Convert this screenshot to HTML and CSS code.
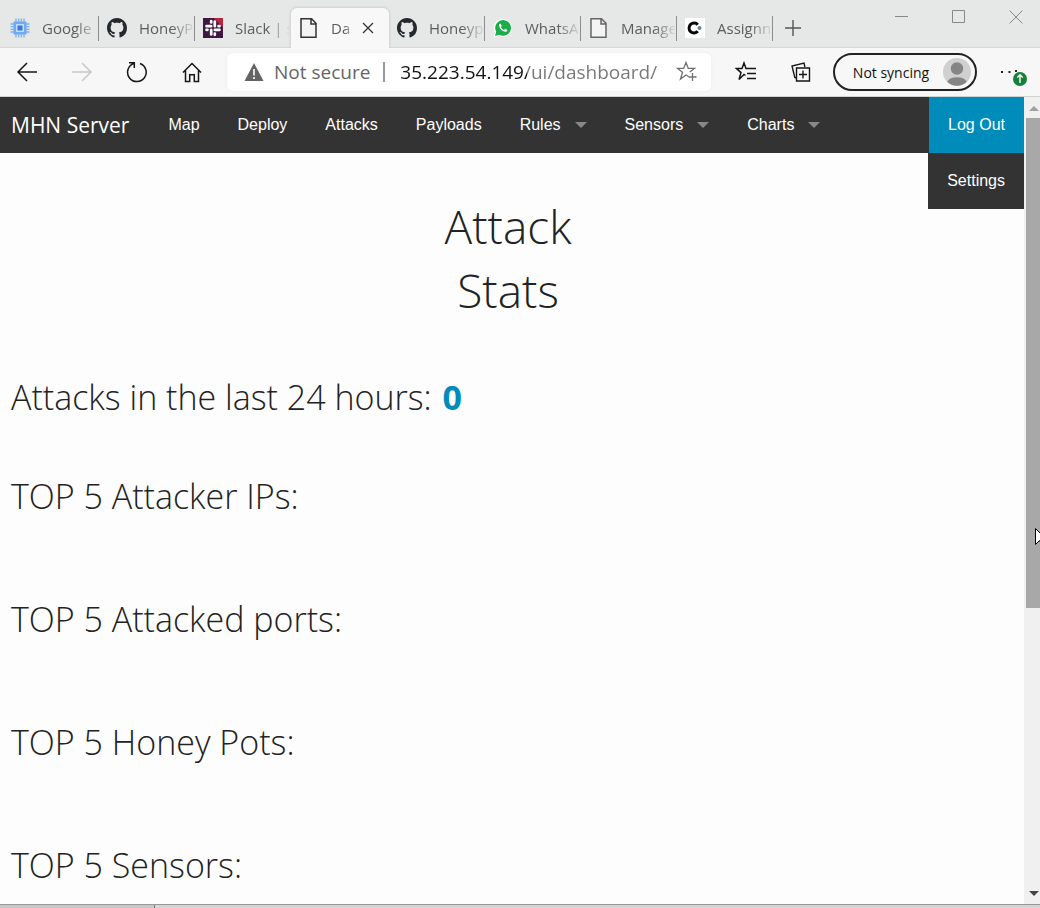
FILE: index.html
```html
<!DOCTYPE html>
<html lang="en">
<head>
<meta charset="utf-8">
<meta name="viewport" content="width=device-width, initial-scale=1">
<title>Dashboard</title>
<link rel="stylesheet" href="styles.css">
</head>
<body>
<svg class="defs" aria-hidden="true">
  <symbol id="github" viewBox="0 0 16 16"><path d="M8 0C3.58 0 0 3.58 0 8c0 3.54 2.29 6.53 5.47 7.59.4.07.55-.17.55-.38 0-.19-.01-.82-.01-1.49-2.01.37-2.53-.49-2.69-.94-.09-.23-.48-.94-.82-1.13-.28-.15-.68-.52-.01-.53.63-.01 1.08.58 1.23.82.72 1.21 1.87.87 2.33.66.07-.52.28-.87.51-1.07-1.78-.2-3.64-.89-3.64-3.95 0-.87.31-1.59.82-2.15-.08-.2-.36-1.02.08-2.12 0 0 .67-.21 2.2.82.64-.18 1.32-.27 2-.27s1.36.09 2 .27c1.53-1.04 2.2-.82 2.2-.82.44 1.1.16 1.92.08 2.12.51.56.82 1.27.82 2.15 0 3.07-1.87 3.75-3.65 3.95.29.25.54.73.54 1.48 0 1.07-.01 1.93-.01 2.2 0 .21.15.46.55.38A8.01 8.01 0 0 0 16 8c0-4.42-3.58-8-8-8z" fill="#24292e"/></symbol>
  <symbol id="page" viewBox="0 0 20 20"><path d="M2 .8h10.500l4.500 4.500V19.200H2zM12 .8V6h5" fill="#f4f4f4" stroke="currentColor" stroke-width="1.500"/></symbol>
</svg>
<div class="window">
  <header class="tabstrip">
    <nav class="tabs" aria-label="Tabs">
      <a class="tab" href="#">
        <svg class="fav" viewBox="0 0 20 20"><path d="M6 .5v19M8.700 .5v19M11.300 .5v19M14 .5v19M.5 6h19M.5 8.700h19M.5 11.300h19M.5 14h19" stroke="#79aef0" stroke-width="1.300"/><rect x="3.500" y="3.500" width="13" height="13" fill="#72a9ef"/><rect x="6" y="6" width="8" height="8" fill="#c5dcf8"/><rect x="7.500" y="7.500" width="5" height="5" fill="#347ad9"/></svg>
        <span class="tab-title">Google</span>
      </a>
      <a class="tab" href="#"><svg class="fav"><use href="#github"/></svg><span class="tab-title">HoneyP</span></a>
      <a class="tab tab-plain" href="#">
        <svg class="fav" viewBox="0 0 20 20"><path d="M0 0h20v20H0z" fill="#3f1745"/><path d="M10.500 0H20v9.500z" fill="#b7263d"/><path d="M3.500 8.200h4.700M8.200 3.200v1.200M11.800 3.500v4.700M15.500 8.200h1M16.500 11.800h-4.700M11.800 16.800v-1.200M8.200 16.500v-4.700M4.500 11.800h-1" stroke="#fff" stroke-width="2.700" stroke-linecap="round"/></svg>
        <span class="tab-title">Slack | s</span>
      </a>
      <div class="tab tab-active">
        <svg class="fav"><use href="#page"/></svg><span class="tab-title">Da</span>
        <button class="close" aria-label="Close tab"><svg viewBox="0 0 12 12" width="12" height="12"><path d="M1 1l10 10M11 1L1 11" stroke="#333" stroke-width="1.300"/></svg></button>
      </div>
      <a class="tab" href="#"><svg class="fav"><use href="#github"/></svg><span class="tab-title">Honeyp</span></a>
      <a class="tab" href="#">
        <svg class="fav" viewBox="0 0 20 20"><path d="M.5 19.500l1.400-5A9 9 0 1 1 5.600 18z" fill="#fff"/><path d="M2 18l1.200-4.200A7.900 7.900 0 1 1 6.200 16.800z" fill="#1bad48"/><path d="M7.300 5.500c-.5 0-1.500.9-1.300 2.200.5 2.800 3.500 5.700 6.200 6 1.300.1 2.300-.8 2.200-1.800l-2.200-1.200-1.100 1.200c-1.500-.6-2.600-1.700-3.200-3l.9-1.100z" fill="#fff"/></svg>
        <span class="tab-title">WhatsA</span>
      </a>
      <a class="tab" href="#"><svg class="fav"><use href="#page"/></svg><span class="tab-title">Manage</span></a>
      <a class="tab" href="#">
        <svg class="fav" viewBox="0 0 20 20"><path d="M0 0h20v20H0z" fill="#fff"/><path d="M12.800 6.700a5 5 0 1 0 0 6.600" fill="none" stroke="#080808" stroke-width="3"/><circle cx="14.500" cy="10" r="2" fill="#6481a0"/></svg>
        <span class="tab-title">Assignn</span>
      </a>
    </nav>
    <button class="icon-btn new-tab" aria-label="New tab"><svg viewBox="0 0 18 18" width="18" height="18"><path d="M9 1v16M1 9h16" stroke="#555" stroke-width="1.400"/></svg></button>
    <div class="controls">
      <button class="icon-btn" aria-label="Minimize"><svg viewBox="0 0 14 14" width="14" height="14"><path d="M0 6.500h13" stroke="#888"/></svg></button>
      <button class="icon-btn" aria-label="Maximize"><svg viewBox="0 0 14 14" width="14" height="14"><path d="M.5.5h12v12H.5z" fill="none" stroke="#888"/></svg></button>
      <button class="icon-btn" aria-label="Close"><svg viewBox="0 0 14 14" width="14" height="14"><path d="M.5.5l13 13M13.500.5l-13 13" stroke="#888"/></svg></button>
    </div>
  </header>

  <div class="toolbar">
    <div class="history">
      <button class="icon-btn" aria-label="Back"><svg viewBox="0 0 22 22" width="22" height="22"><path d="M21 11H2M11 2L2 11l9 9" fill="none" stroke="#161616" stroke-width="1.500"/></svg></button>
      <button class="icon-btn" aria-label="Forward" disabled><svg viewBox="0 0 22 22" width="22" height="22"><path d="M1 11h19M11 2l9 9-9 9" fill="none" stroke="#c8c8c8" stroke-width="1.500"/></svg></button>
      <button class="icon-btn" aria-label="Refresh"><svg viewBox="0 0 22 22" width="22" height="22"><path d="M14 2.500A9.300 9.300 0 1 1 7.500 2.600M3 1.800h5.300V7" fill="none" stroke="#161616" stroke-width="1.500"/></svg></button>
      <button class="icon-btn" aria-label="Home"><svg viewBox="0 0 22 22" width="22" height="22"><path d="M2 11.500L11 2.500l9 9M4.500 9.500v11h4.200v-6.700h4.600v6.700h4.200v-11" fill="none" stroke="#161616" stroke-width="1.500"/></svg></button>
    </div>
    <div class="address">
      <svg viewBox="0 0 20 20" width="20" height="20"><path d="M10 1l9.500 18H.5z" fill="#646464"/><path d="M10 7v6.500M10 15v2" stroke="#fff" stroke-width="1.600"/></svg>
      <label class="secure" for="url">Not secure</label>
      <span class="divider"></span>
      <input id="url" class="url" type="text" value="35.223.54.149/ui/dashboard/" spellcheck="false">
      <button class="icon-btn" aria-label="Add to favorites"><svg viewBox="0 0 22 22" width="22" height="22"><path d="M12.500 15.500L10 14l-5.500 4 2-6.700L1.500 7.400h6.200L10 1.500l2.300 5.900h6.200L13.700 11M16.500 12v8M12.500 16h8" fill="none" stroke="#707070" stroke-width="1.300"/></svg></button>
    </div>
    <div class="tools">
      <button class="icon-btn" aria-label="Favorites"><svg viewBox="0 0 22 22" width="22" height="22"><path d="M10.500 14.500L9 13.500 4 18.500 6 11.600 1.500 7.500H7L9 2l2 5.500h10M12 12.500h9M12 17.500h9" fill="none" stroke="#161616" stroke-width="1.500"/></svg></button>
      <button class="icon-btn" aria-label="Collections"><svg viewBox="0 0 22 22" width="22" height="22"><path d="M6.500 7h13v13h-13zM13 9.500v8M9 13.500h8M6.500 17L4.800 16.500 2 5l12-3 .9 4" fill="none" stroke="#161616" stroke-width="1.400"/></svg></button>
      <button class="profile"><span>Not syncing</span><svg viewBox="0 0 28 28" width="28" height="28"><circle cx="14" cy="14" r="14" fill="#d0d0d0"/><circle cx="14" cy="10.500" r="6.200" fill="#858585"/><path d="M4.200 23.800a10.500 7 0 0 1 19.600 0A14 14 0 0 1 4.200 23.800z" fill="#858585"/></svg></button>
      <button class="icon-btn more" aria-label="Settings and more"><svg viewBox="0 0 28 28" width="28" height="28"><path d="M1 13h2v2H1zM8.500 13h2v2h-2zM15 12h2v2h-2z" fill="#222"/><circle cx="20" cy="21" r="7" fill="#16803a"/><path d="M20 25v-8M17.300 19.500L20 16.800l2.700 2.700" fill="none" stroke="#fff" stroke-width="1.400"/></svg></button>
    </div>
  </div>

  <div class="viewport">
    <div class="document">
      <nav class="topbar" aria-label="Main">
        <a class="brand" href="#">MHN Server</a>
        <a class="link" href="#">Map</a>
        <a class="link" href="#">Deploy</a>
        <a class="link" href="#">Attacks</a>
        <a class="link" href="#">Payloads</a>
        <a class="link has-menu" href="#">Rules</a>
        <a class="link has-menu" href="#">Sensors</a>
        <a class="link has-menu" href="#">Charts</a>
        <div class="account">
          <a class="link logout" href="#">Log Out</a>
          <a class="link settings" href="#">Settings</a>
        </div>
      </nav>
      <main class="content">
        <h1>Attack<br>Stats</h1>
        <section class="recent"><h2>Attacks in the last 24 hours: <strong>0</strong></h2></section>
        <section class="stat"><h2>TOP 5 Attacker IPs:</h2></section>
        <section class="stat"><h2>TOP 5 Attacked ports:</h2></section>
        <section class="stat"><h2>TOP 5 Honey Pots:</h2></section>
        <section class="stat"><h2>TOP 5 Sensors:</h2></section>
      </main>
    </div>
    <div class="scrollbar" aria-hidden="true">
      <svg viewBox="0 0 16 21" width="16" height="21"><path d="M5 14l5-5 5 5z" fill="#a0a0a0"/></svg>
      <div class="track"><div class="thumb"></div></div>
      <svg viewBox="0 0 16 21" width="16" height="21"><path d="M5 8h10l-5 5z" fill="#454545"/></svg>
    </div>
    <svg class="cursor" viewBox="0 0 12 19" width="12" height="19" aria-hidden="true"><path d="M.5.5v16l4-4 3 6 2-1-3-5.500H12z" fill="#fff" stroke="#000"/></svg>
  </div>
  <footer class="edge"><div class="edge-left"></div></footer>
</div>
</body>
</html>
```
FILE: styles.css
```css
* { box-sizing: border-box; }
body { margin: 0; background: #fdfdfd; font-family: "Open Sans", sans-serif; overflow: hidden; }
button { border: 0; padding: 0; background: none; font: inherit; color: inherit; }
a { color: inherit; text-decoration: none; }
svg { display: block; flex: none; }
.defs { position: absolute; width: 0; height: 0; }
.window { display: flex; flex-direction: column; height: 100vh; }
.icon-btn { display: flex; align-items: center; justify-content: center; flex: none; }

.tabstrip { display: flex; flex: none; height: 48px; padding-left: 3px; background: #e6e8e7; border-bottom: 1px solid #d6d6d6; }
.tabs { display: flex; padding-top: 8px; min-width: 0; }
.tab { display: flex; align-items: center; gap: 12px; width: 96px; padding: 0 2px 0 8px; color: #5c5c5c; font-size: 15px; line-height: 24px;
  background: linear-gradient(#8c8c8c, #8c8c8c) right 8px / 1px 25px no-repeat; }
.tab:first-child { padding-left: 7px; }
.fav { width: 20px; height: 20px; color: #666; }
.tab-title { flex: 1; min-width: 0; white-space: nowrap; mask-image: linear-gradient(90deg, #000 60%, rgba(0, 0, 0, 0.1)); }
.tab-plain { background: none; }
.tab-active { width: 98px; height: 40px; background: #f8f8f8; border-radius: 6px 6px 0 0; box-shadow: 0 0 3px #b8b8b8; clip-path: inset(-4px -4px 0 -4px); }
.tab-active .fav { color: #333; }
.close { padding: 4px; margin: 0 9px 0 -8px; }
.new-tab { width: 40px; padding-top: 8px; }
.controls { display: flex; gap: 43px; margin-left: auto; padding: 10px 17px 0 0; height: 24px; }

.toolbar { display: flex; align-items: center; flex: none; height: 49px; padding: 0 12px 0 16px; background: #f7f7f7; border-bottom: 1px solid #d0d3d4; }
.history { display: flex; gap: 33px; margin-right: 24px; }
.address { display: flex; align-items: center; flex: 1; min-width: 0; height: 38px; padding: 0 13px 0 17px; background: #fff; border-radius: 6px; font-size: 19px; box-shadow: 0 0 4px #ececec; }
.secure { margin-left: 10px; color: #666; white-space: nowrap; }
.divider { width: 2px; height: 20px; margin: 0 15px 0 13px; background: #999; }
.url { flex: 1; min-width: 0; padding: 0; border: 0; outline: 0; font: inherit; color: #111;
  background: linear-gradient(90deg, #111 127px, #777 127px); background-clip: text; -webkit-text-fill-color: transparent; }
.tools { display: flex; align-items: center; margin-left: 24px; }
.tools .icon-btn + .icon-btn { margin-left: 33px; }
.profile { display: flex; align-items: center; gap: 12px; height: 38px; margin: 0 23px 0 21px; padding: 0 4px 0 16px; border: 2px solid #222; border-radius: 19px; font-size: 14px; white-space: nowrap; color: #111; }
.profile span { width: 80px; }

.viewport { position: relative; display: flex; flex: 1; min-height: 0; overflow: hidden; }
.document { flex: 1; min-width: 0; overflow: hidden; background: #fdfdfd; }
.topbar { display: flex; height: 56px; background: #333; color: #fff; font: 16px/56px "Liberation Sans", Arial, sans-serif; white-space: nowrap; }
.brand { padding: 0 20px 0 11px; font-family: "Open Sans", sans-serif; font-size: 21px; }
.link { padding: 0 19px; }
.has-menu::after { content: ""; display: inline-block; margin-left: 14px; border: 6px solid transparent; border-top-color: #888; border-bottom: 0; vertical-align: 2px; }
.account { position: relative; margin-left: auto; }
.account .link { display: block; }
.logout { background: #008cba; }
.settings { position: absolute; top: 100%; right: 0; background: #333; }
.content { padding: 41px 19px 0 11px; color: #222; }
h1, h2 { margin: 0; font-weight: 300; }
h1 { font-size: 46px; line-height: 64px; text-align: center; }
h2 { font-size: 34px; line-height: 48px; }
h2 strong { margin-left: 2px; font-weight: 700; color: #008cba; }
.recent { padding: 51px 0; }
.stat { min-height: 123px; }

.scrollbar { display: flex; flex-direction: column; width: 16px; background: #f0f0f0; }
.track { flex: 1; padding-left: 2px; }
.thumb { height: 64%; background: #a8a8a8; }
.cursor { position: absolute; top: 431px; left: calc(100% - 5px); }
.edge { flex: none; height: 4px; background: #d5d5d5; border-top: 1px solid #999; }
.edge-left { width: 155px; height: 3px; background: #c8c8c8; border-right: 1px solid #777; }
```
